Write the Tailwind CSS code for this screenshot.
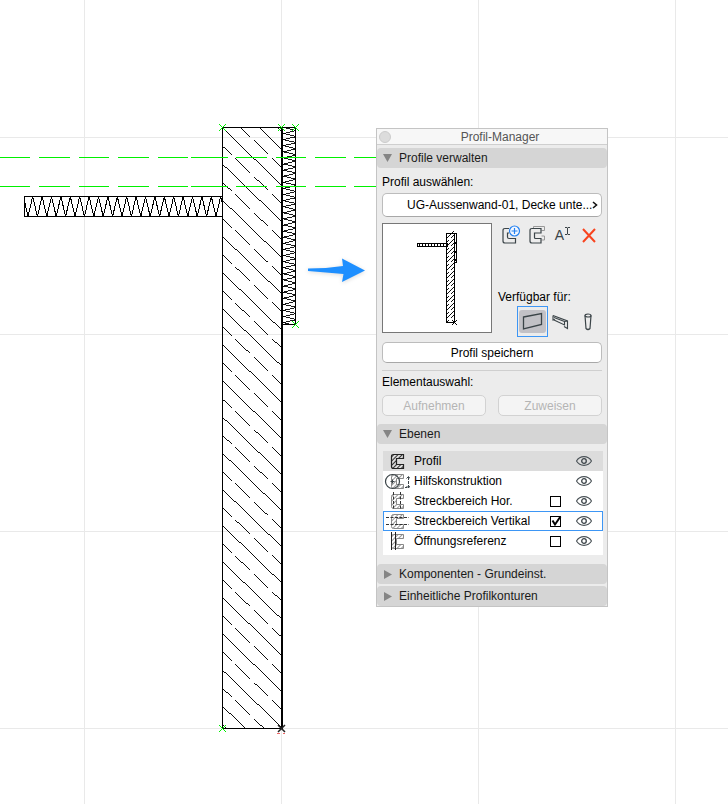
<!DOCTYPE html>
<html lang="de">

<head>
    <meta charset="UTF-8">
    <meta name="viewport" content="width=device-width, initial-scale=1.0">
    <title>Profil-Manager</title>
    <script src="https://cdn.jsdelivr.net/npm/@tailwindcss/browser@4"></script>
</head>

<body class="relative min-h-screen overflow-hidden bg-white font-['Liberation_Sans',Arial,sans-serif] text-xs text-black">

    <!-- Shared icon shapes -->
    <svg class="absolute h-0 w-0" aria-hidden="true">
        <defs>
            <pattern id="hatch" width="3" height="3" patternUnits="userSpaceOnUse" patternTransform="rotate(45)">
                <rect width="1" height="3" fill="#333" />
            </pattern>
            <pattern id="hatch-light" width="3" height="3" patternUnits="userSpaceOnUse" patternTransform="rotate(45)">
                <rect width="1" height="3" fill="#999" />
            </pattern>
            <symbol id="eye" viewBox="0 0 16 10">
                <path d="M.5 5C4-.8 12-.8 15.500 5 12 10.800 4 10.800.5 5z" fill="none" stroke="#4a5257" stroke-width="1.100" />
                <circle cx="8" cy="5" r="2.300" fill="none" stroke="#3c4449" stroke-width="1.300" />
            </symbol>
            <symbol id="c-light" viewBox="0 0 26 20">
                <path d="M7.500 5.500q0-2 2-2h10v4h-7v6h7v4h-10q-2 0-2-2z" fill="url(#hatch-light)" stroke="#888" />
            </symbol>
        </defs>
    </svg>

    <!-- Drawing canvas -->
    <svg class="absolute left-0 top-0" width="728" height="804" fill="none" aria-label="Wandprofil">
        <path d="M84.500 0V804M281.500 0V804M478.500 0V804M675.500 0V804M0 137.500H728M0 334.500H728M0 531.500H728M0 728.500H728" stroke="#e9e9e9" />
        <defs>
            <clipPath id="wall-clip"><rect x="222" y="127" width="60" height="602" /></clipPath>
            <clipPath id="left-clip"><rect x="24" y="196" width="199" height="21" /></clipPath>
            <clipPath id="right-clip"><rect x="282" y="127" width="14" height="198" /></clipPath>
        </defs>
        <g stroke="#000" shape-rendering="crispEdges">
            <path id="wall-hatch" clip-path="url(#wall-clip)" stroke-width=".95" />
            <path id="left-zigzag" clip-path="url(#left-clip)" />
            <path id="right-zigzag" clip-path="url(#right-clip)" stroke-width=".9" />
            <path d="M222.500 196.500H24.500V216.500H222.500M295.500 127.500V324.500H282" />
            <path d="M295.500 127.500H222.500V728.500H282" />
            <path d="M282 127V729" stroke-width="2" />
        </g>
        <g stroke="#00f000" shape-rendering="crispEdges">
            <path d="M0 157.500H30M39 157.500H70M79 157.500H109M118 157.500H149M158 157.500H188M191 157.500H228M236 157.500H267M276 157.500H306M315 157.500H346M354 157.500H376" />
            <path d="M0 186.500H30M39 186.500H70M79 186.500H109M118 186.500H149M158 186.500H188M191 186.500H228M236 186.500H267M276 186.500H306M315 186.500H346M354 186.500H376" />
        </g>
        <path d="M219 124l7 7m0-7l-7 7M278 124l7 7m0-7l-7 7M292 124l7 7m0-7l-7 7M292 321l7 7m0-7l-7 7M219 725l7 7m0-7l-7 7" stroke="#00f000" />
        <path d="M278 725l7 7m0-7l-7 7" stroke="#222" stroke-width="1.500" />
        <path d="M277 733.500h3m3 0h2" stroke="#e66" />
        <path class="drop-shadow-sm" d="M308 268.500Q326 268.500 343 266L342 258.500 365 270.500 342 282 343.500 274Q326 272.500 308 271z" fill="#1e8fff" />
    </svg>

    <!-- Palette -->
    <main class="absolute left-[376px] top-32 w-58 border border-[#c4c4c4] bg-[#ececec]">
        <div class="relative flex h-4 items-center justify-center border-b border-[#cfcfcf] bg-[#f7f7f7] pl-4 text-[#555]">
            <button class="absolute left-0.5 top-0.5 size-3 rounded-full border border-[#ccc] bg-[#dcdcdc]" aria-label="Schließen"></button>
            <h1>Profil-Manager</h1>
        </div>

        <button class="mt-[3px] flex h-5 w-full items-center gap-[7px] rounded-sm bg-[#d5d5d5] pl-1.5 text-[#1a1a1a]" aria-expanded="true">
            <svg width="9" height="8"><path d="M0 0h9L4.500 8z" fill="#858585" /></svg>
            Profile verwalten
        </button>

        <section class="px-[5px] pb-2 pt-[5px]">
            <label for="profil" class="block h-5 leading-[18px]">Profil auswählen:</label>
            <div class="relative">
                <select id="profil" class="block h-6 w-full appearance-none rounded-[5px] border border-[#bcbcbc] border-b-[#a8a8a8] bg-white pl-6 pr-2">
                    <option>UG-Aussenwand-01, Decke unte...</option>
                </select>
                <svg class="pointer-events-none absolute right-1 top-2" width="6" height="8"><path d="M1 1l3.500 3L1 7" fill="none" stroke="#111" stroke-width="1.600" /></svg>
            </div>

            <div class="mt-1.5 flex gap-1.5">
                <div class="size-[110px] shrink-0 border border-[#777] bg-white">
                    <svg width="108" height="108" fill="none" stroke="#000" shape-rendering="crispEdges">
                        <rect x="34.500" y="19.500" width="30" height="3" />
                        <path d="M36 21h28" stroke-width="3" stroke-dasharray="1 2" />
                        <path id="thumb-hatch" stroke-width=".95" />
                        <path d="M63.500 9.500h8v89h-8z" />
                        <path d="M71.500 9.500h2v29h-2" />
                        <path d="M72.500 18v2M72.500 27v2M72.500 35v2" />
                        <path d="M69 96l5 5m0-5l-5 5" />
                    </svg>
                </div>
                <div class="flex min-w-0 flex-1 flex-col justify-between pt-0.5">
                    <div class="flex justify-between pl-1 pr-[5px]">
                        <button aria-label="Neues Profil">
                            <svg width="19" height="20" fill="none" stroke="#3b4448" stroke-width="1.200">
                                <path d="M7 3.500H3q-2 0-2 2V16q0 2 2 2H13.500V13.500H7Q5.500 13.500 5.500 12V8H7" />
                                <circle cx="12.500" cy="6" r="5" fill="#f4f8ff" stroke="#2582f0" />
                                <path d="M12.500 3v6M9.500 6h6" stroke="#2582f0" />
                            </svg>
                        </button>
                        <button aria-label="Profil duplizieren">
                            <svg width="18" height="20" fill="none">
                                <path d="M4.500 3.500V1.500H15.500V5.500H12.500M12.500 11H15.500V15H12.500" stroke="#999" />
                                <path d="M12 3.500H3q-2 0-2 2V16q0 2 2 2H12V13.500H6.500Q5.500 13.500 5.500 12.500V8H12z" stroke="#3b4448" stroke-width="1.200" />
                            </svg>
                        </button>
                        <button class="flex h-5 items-start text-[#3b4448]" aria-label="Profil umbenennen">
                            <span class="text-sm">A</span>
                            <svg width="9" height="12" fill="none" stroke="#3b4448"><path d="M1 2.500h2l.5.500.5-.5h2M3.500 3v6M1 9.500h2l.5-.5.5.500h2" /></svg>
                        </button>
                        <button aria-label="Profil löschen">
                            <svg width="16" height="20" fill="none" stroke="#f8441f" stroke-width="2"><path d="M2 4l12 13M14 4L2 17" /></svg>
                        </button>
                    </div>
                    <div>
                        <p class="h-[18px] leading-[18px]">Verfügbar für:</p>
                        <div class="-mb-1 flex items-center pl-[19px]">
                            <button class="border border-[#3d96f5] px-px py-[3px]" aria-label="Wand" aria-pressed="true">
                                <svg class="rounded-[3px] bg-[#c2c1c6]" width="27" height="23" fill="none" stroke="#3b4448" stroke-width="1.300"><path d="M4.500 7L22.500 3.500V14.500L4.500 19z" /></svg>
                            </button>
                            <button class="ml-1" aria-label="Träger">
                                <svg width="17" height="20" fill="none" stroke="#3b4448" stroke-width="1.100"><path d="M1 3.500V8L3 7.500M1 3.500L15.500 9V16.500L12 14.500M2 8L12.500 13V9.500L15.500 9M12.500 9.500L2 5.500" /></svg>
                            </button>
                            <button class="ml-[15px]" aria-label="Stütze">
                                <svg width="8" height="18" fill="none" stroke="#3b4448" stroke-width="1.200"><ellipse cx="4" cy="2.500" rx="3" ry="1.500" /><path d="M1 2.500L2 15.500Q4 17.500 6 15.500L7 2.500" /></svg>
                            </button>
                        </div>
                    </div>
                </div>
            </div>

            <button class="mt-[9px] block h-[21px] w-full rounded-[5px] border border-[#bcbcbc] border-b-[#a8a8a8] bg-white">Profil speichern</button>
            <hr class="mt-[7px] border-[#cfcfcf]">
            <p class="mt-0.5 h-[18px] leading-[18px]">Elementauswahl:</p>
            <div class="mt-1 grid grid-cols-2 gap-3">
                <button class="h-[21px] rounded-[5px] border border-[#d2d2d2] bg-[#f4f4f4] text-[#b4b4b4]" disabled>Aufnehmen</button>
                <button class="h-[21px] rounded-[5px] border border-[#d2d2d2] bg-[#f4f4f4] text-[#b4b4b4]" disabled>Zuweisen</button>
            </div>
        </section>

        <button class="flex h-5 w-full items-center gap-[7px] rounded-sm bg-[#d5d5d5] pl-1.5 text-[#1a1a1a]" aria-expanded="true">
            <svg width="9" height="8"><path d="M0 0h9L4.500 8z" fill="#858585" /></svg>
            Ebenen
        </button>

        <ul class="ml-1.5 mr-1 mt-[7px] bg-white pb-1">
            <li class="flex h-5 items-center bg-[#dcdcdc] pl-px pr-[11px]">
                <svg width="26" height="20"><path d="M7.500 5.500q0-2 2-2h10v4h-7v6h7v4h-10q-2 0-2-2z" fill="url(#hatch)" stroke="#222" stroke-width="1.200" /></svg>
                <span class="ml-1 flex-1">Profil</span>
                <button aria-label="Profil einblenden"><svg width="16" height="10"><use href="#eye" /></svg></button>
            </li>
            <li class="flex h-5 items-center pl-px pr-[11px]">
                <svg width="26" height="20" fill="none" stroke="#3b4448">
                    <use href="#c-light" width="26" height="20" />
                    <circle cx="8.500" cy="10.500" r="7" stroke-width="1.200" />
                    <path d="M6.500 10.500h4M8.500 8.500v4" />
                    <path d="M21 16.500h2M24.500 6v11" stroke-dasharray="3 1" />
                    <path d="M22.500 7.500l2-2 1.500 2M22.500 15l2 2 1.500-2" />
                </svg>
                <span class="ml-1 flex-1">Hilfskonstruktion</span>
                <button aria-label="Hilfskonstruktion einblenden"><svg width="16" height="10"><use href="#eye" /></svg></button>
            </li>
            <li class="flex h-5 items-center pl-px pr-[11px]">
                <svg width="26" height="20" fill="none" stroke="#333">
                    <use href="#c-light" width="26" height="20" />
                    <path d="M9.500 1v18M16.500 1v18" stroke-dasharray="3 1.500" />
                </svg>
                <label for="hor" class="ml-1 flex-1">Streckbereich Hor.</label>
                <input id="hor" type="checkbox" class="mr-[15px] size-[11px] appearance-none border border-black bg-white">
                <button aria-label="Streckbereich Hor. einblenden"><svg width="16" height="10"><use href="#eye" /></svg></button>
            </li>
            <li class="flex h-5 items-center pl-px pr-[11px] outline -outline-offset-1 outline-[#3d96f5]">
                <svg width="26" height="20" fill="none" stroke="#333">
                    <use href="#c-light" width="26" height="20" />
                    <path d="M2 6.500h23M2 13.500h23" stroke-dasharray="3 1.500" />
                </svg>
                <label for="vert" class="ml-1 flex-1">Streckbereich Vertikal</label>
                <span class="relative mr-[15px] flex">
                    <input id="vert" type="checkbox" checked class="size-[11px] appearance-none border border-black bg-white">
                    <svg class="pointer-events-none absolute left-0 top-0 overflow-visible" width="11" height="11"><path d="M2.500 4.500l2.500 4L10.500.5" fill="none" stroke="#000" stroke-width="2" /></svg>
                </span>
                <button aria-label="Streckbereich Vertikal einblenden"><svg width="16" height="10"><use href="#eye" /></svg></button>
            </li>
            <li class="flex h-5 items-center pl-px pr-[11px]">
                <svg width="26" height="20" fill="none" stroke="#222">
                    <use href="#c-light" width="26" height="20" />
                    <path d="M7.500 1v18M11.500 1v18" />
                </svg>
                <label for="ref" class="ml-1 flex-1">Öffnungsreferenz</label>
                <input id="ref" type="checkbox" class="mr-[15px] size-[11px] appearance-none border border-black bg-white">
                <button aria-label="Öffnungsreferenz einblenden"><svg width="16" height="10"><use href="#eye" /></svg></button>
            </li>
        </ul>

        <button class="mt-[9px] flex h-5 w-full items-center gap-[7px] rounded-sm bg-[#d5d5d5] pl-[7px] text-[#1a1a1a]" aria-expanded="false">
            <svg width="8" height="9"><path d="M0 0v9l8-4.500z" fill="#858585" /></svg>
            Komponenten - Grundeinst.
        </button>
        <button class="mt-0.5 flex h-5 w-full items-center gap-[7px] rounded-sm bg-[#d5d5d5] pl-[7px] text-[#1a1a1a]" aria-expanded="false">
            <svg width="8" height="9"><path d="M0 0v9l8-4.500z" fill="#858585" /></svg>
            Einheitliche Profilkonturen
        </button>
    </main>

    <script>
        // concrete hatch: solid and dashed diagonals in turn
        let wall = '';
        const dashes = [[222, 232], [235, 250], [254, 268], [272, 282]];
        for (let i = -4; i < 34; i++) {
            const y = 127.5 + i * 18.07;
            const parts = i % 2 === 0 ? [[222, 282]] : dashes;
            parts.forEach(([a, b]) => {
                wall += `M${a} ${y + (a - 222) * 0.97}L${b} ${y + (b - 222) * 0.97}`;
            });
        }
        document.getElementById('wall-hatch').setAttribute('d', wall);

        // insulation
        let left = 'M23.5 196.5';
        for (let i = 0; i < 22; i++) {
            left += `L${28 + i * 9.4} 216.5L${32.7 + i * 9.4} 196.5`;
        }
        document.getElementById('left-zigzag').setAttribute('d', left);

        let right = 'M282.5 127.5';
        for (let i = 0; i < 33; i++) {
            right += `L295.5 ${130.5 + i * 6.1}L282.5 ${133.5 + i * 6.1}`;
        }
        document.getElementById('right-zigzag').setAttribute('d', right);

        // thumbnail hatch
        let thumb = '';
        for (let i = 0; i < 22; i++) {
            const y = 14 + i * 4;
            thumb += i % 2 === 0 ? `M64 ${y}l7 -7` : `M64 ${y}l2 -2M68 ${y - 4}l3 -3`;
        }
        document.getElementById('thumb-hatch').setAttribute('d', thumb);
    </script>
</body>

</html>
